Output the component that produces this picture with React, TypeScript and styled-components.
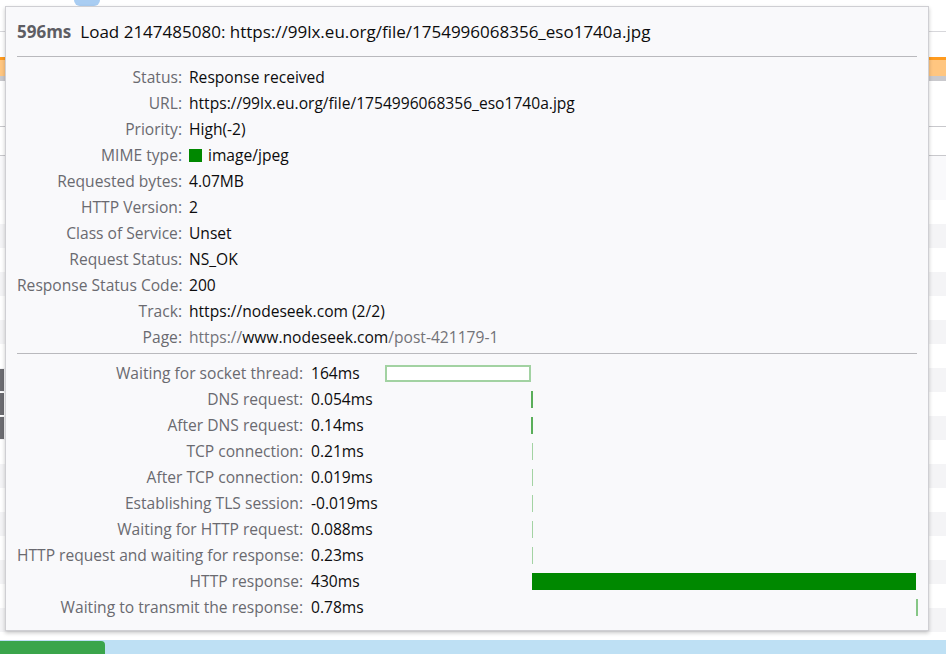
import styled, { createGlobalStyle } from 'styled-components';

const GlobalStyle = createGlobalStyle`
  html, body {
    margin: 0;
    padding: 0;
    overflow: hidden;
    background: #ffffff;
  }
  body {
    font-family: "Open Sans", "Noto Sans", sans-serif;
  }
`;

/* ---------- background profiler page (only edges are visible) ---------- */

const Page = styled.div`
  position: relative;
  display: flex;
  flex-direction: column;
  width: 946px;
  height: 654px;
  overflow: hidden;
  background: #ffffff;
`;

const TopBar = styled.div`
  height: 31px;
  flex-shrink: 0;
  border-bottom: 1px solid #d7d7db;
  display: flex;
  padding-left: 74px;
`;

const TopTab = styled.div`
  width: 26px;
  height: 6px;
  border-radius: 0 0 6px 6px;
  background: #a9cdf2;
`;

const TrackArea = styled.div`
  height: 95px;
  flex-shrink: 0;
  display: flex;
  flex-direction: column;
  padding-top: 25px;
  border-bottom: 1px solid #c8c8cc;
  box-sizing: border-box;
`;

const OrangeTrack = styled.div`
  height: 16px;
  border-top: 3px solid #ff9b1f;
  background: #ffc680;
  border-bottom: 5px solid #c9c9cd;
`;

const SubTrack = styled.div`
  height: 28px;
  flex-shrink: 0;
  border-bottom: 1px solid #c8c8cc;
`;

const FillerArea = styled.div`
  height: 44px;
  flex-shrink: 0;
  background: #f9f9fb;
`;

const StripeList = styled.div`
  flex: 1;
  display: flex;
  flex-direction: column;
  overflow: hidden;
`;

const StripeRow = styled.div<{ $odd: boolean }>`
  height: 24px;
  flex-shrink: 0;
  display: flex;
  background: ${(p) => (p.$odd ? '#f4f4f6' : '#ffffff')};
`;

const Gutter = styled.div<{ $dark: boolean }>`
  width: 4px;
  margin: 1px 0;
  background: ${(p) => (p.$dark ? '#6b6b70' : 'transparent')};
`;

const BottomBar = styled.div`
  height: 14px;
  flex-shrink: 0;
  background: #bee0f4;
  display: flex;
  align-items: flex-end;
`;

const BottomGreen = styled.div`
  width: 105px;
  height: 13px;
  background: #3aa54b;
  border-radius: 0 4px 0 0;
`;

/* ---------- tooltip ---------- */

const Tooltip = styled.div`
  position: absolute;
  left: 5px;
  top: 6px;
  width: 924px;
  height: 625px;
  box-sizing: border-box;
  padding: 11px 11px 0 11px;
  background: #f9f9fb;
  border: 1px solid #cfcfd3;
  box-shadow: 0 2px 4px rgba(0, 0, 0, 0.22);
  color: #0c0c0d;
  font-size: 15.6px;
  display: flex;
  flex-direction: column;
`;

const Title = styled.div`
  display: flex;
  align-items: center;
  height: 26px;
  white-space: nowrap;
  gap: 9px;
  font-size: 17px;
`;

const Timing = styled.span`
  font-weight: 700;
  color: #5e5e64;
`;

const Separator = styled.div<{ $top: number; $bottom: number }>`
  height: 1px;
  background: #b9b9bd;
  margin: ${(p) => p.$top}px 0 ${(p) => p.$bottom}px 0;
`;

const Details = styled.div`
  display: grid;
  grid-template-columns: 165px 1fr;
  column-gap: 7px;
  grid-auto-rows: 26px;
  align-items: center;
  white-space: nowrap;
`;

const Label = styled.div`
  text-align: right;
  color: #6a6a70;
`;

const Value = styled.div`
  display: flex;
  align-items: center;
  color: #0c0c0d;
`;

const Dim = styled.span`
  color: #737378;
`;

const Swatch = styled.span`
  display: inline-block;
  width: 13px;
  height: 13px;
  background: #008800;
  margin-right: 6px;
`;

const Phases = styled.div`
  display: grid;
  grid-template-columns: 286px 66px 532px;
  column-gap: 8px;
  grid-auto-rows: 26px;
  align-items: center;
  white-space: nowrap;
`;

const Graph = styled.div`
  position: relative;
  height: 17px;
`;

type BarKind = 'outline' | 'dark' | 'light' | 'solid' | 'end';

const Bar = styled.div<{ $kind: BarKind }>`
  position: absolute;
  top: 0;
  height: 17px;
  box-sizing: border-box;
  min-width: 1px;
  background: ${(p) =>
    p.$kind === 'outline'
      ? '#ffffff'
      : p.$kind === 'solid'
      ? '#008800'
      : p.$kind === 'dark'
      ? '#5aae5a'
      : p.$kind === 'end'
      ? '#86c686'
      : '#a3d3a3'};
  border: ${(p) => (p.$kind === 'outline' ? '2px solid #a2d2a2' : 'none')};
`;

const details: { label: string; value: React.ReactNode }[] = [
  { label: 'Status', value: 'Response received' },
  { label: 'URL', value: 'https://99lx.eu.org/file/1754996068356_eso1740a.jpg' },
  { label: 'Priority', value: 'High(-2)' },
  {
    label: 'MIME type',
    value: (
      <>
        <Swatch />
        image/jpeg
      </>
    ),
  },
  { label: 'Requested bytes', value: '4.07MB' },
  { label: 'HTTP Version', value: '2' },
  { label: 'Class of Service', value: 'Unset' },
  { label: 'Request Status', value: 'NS_OK' },
  { label: 'Response Status Code', value: '200' },
  { label: 'Track', value: 'https://nodeseek.com (2/2)' },
  {
    label: 'Page',
    value: (
      <>
        <Dim>https://</Dim>www.nodeseek.com<Dim>/post-421179-1</Dim>
      </>
    ),
  },
];

const TOTAL = 596;
const GRAPH_WIDTH = 532;

const phases: { label: string; value: string; start: number; dur: number; kind: BarKind; px?: number }[] = [
  { label: 'Waiting for socket thread', value: '164ms', start: 0, dur: 164, kind: 'outline' },
  { label: 'DNS request', value: '0.054ms', start: 164, dur: 0.054, kind: 'dark', px: 2 },
  { label: 'After DNS request', value: '0.14ms', start: 164.054, dur: 0.14, kind: 'dark', px: 2 },
  { label: 'TCP connection', value: '0.21ms', start: 164.194, dur: 0.21, kind: 'light' },
  { label: 'After TCP connection', value: '0.019ms', start: 164.404, dur: 0.019, kind: 'light' },
  { label: 'Establishing TLS session', value: '-0.019ms', start: 164.423, dur: 0, kind: 'light' },
  { label: 'Waiting for HTTP request', value: '0.088ms', start: 164.404, dur: 0.088, kind: 'light' },
  { label: 'HTTP request and waiting for response', value: '0.23ms', start: 164.492, dur: 0.23, kind: 'light' },
  { label: 'HTTP response', value: '430ms', start: 164.72, dur: 430, kind: 'solid' },
  { label: 'Waiting to transmit the response', value: '0.78ms', start: 594.72, dur: 0.78, kind: 'end', px: 2 },
];

export default function App() {
  const stripes = Array.from({ length: 19 }, (_, i) => i);
  return (
    <>
      <GlobalStyle />
      <Page>
        <TopBar>
          <TopTab />
        </TopBar>
        <TrackArea>
          <OrangeTrack />
        </TrackArea>
        <SubTrack />
        <FillerArea />
        <StripeList>
          {stripes.map((i) => (
            <StripeRow key={i} $odd={i % 2 === 1}>
              <Gutter $dark={i >= 7 && i <= 9} />
            </StripeRow>
          ))}
        </StripeList>
        <BottomBar>
          <BottomGreen />
        </BottomBar>

        <Tooltip>
          <Title>
            <Timing>596ms</Timing>
            <span>Load 2147485080: https://99lx.eu.org/file/1754996068356_eso1740a.jpg</span>
          </Title>
          <Separator $top={12} $bottom={7} />
          <Details>
            {details.map((d) => (
              <>
                <Label key={d.label + 'l'}>{d.label}:</Label>
                <Value key={d.label + 'v'}>{d.value}</Value>
              </>
            ))}
          </Details>
          <Separator $top={3} $bottom={6} />
          <Phases>
            {phases.map((p) => {
              const left = (p.start / TOTAL) * GRAPH_WIDTH;
              const width = Math.max(p.px ?? 1, (p.dur / TOTAL) * GRAPH_WIDTH);
              return (
                <>
                  <Label key={p.label + 'l'}>{p.label}:</Label>
                  <Value key={p.label + 'v'}>{p.value}</Value>
                  <Graph key={p.label + 'g'}>
                    <Bar $kind={p.kind} style={{ left: `${left}px`, width: `${width}px` }} />
                  </Graph>
                </>
              );
            })}
          </Phases>
        </Tooltip>
      </Page>
    </>
  );
}
